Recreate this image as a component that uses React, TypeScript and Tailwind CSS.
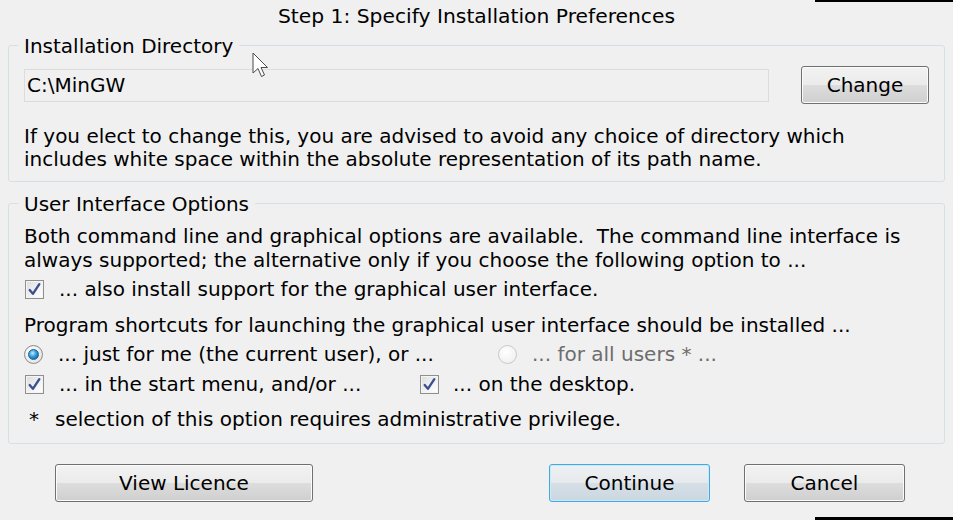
import React from "react";

const font = { fontFamily: '"DejaVu Sans", Verdana, sans-serif' };

function Checkbox() {
  return (
    <span className="inline-flex h-[19px] w-[19px] shrink-0 items-center justify-center border border-[#8f8f8f] bg-[linear-gradient(135deg,#dcdcdc_0%,#f4f4f4_60%,#ffffff_100%)] shadow-[inset_0_0_0_1px_#f4f4f4]">
      <svg width="15" height="15" viewBox="0 0 14 14">
        <path d="M2.5 7.5 L5.5 11 L11.5 2" fill="none" stroke="#3b4f93" strokeWidth="2.2" strokeLinecap="round" strokeLinejoin="round" />
      </svg>
    </span>
  );
}

function Radio({ checked, disabled }: { checked?: boolean; disabled?: boolean }) {
  return (
    <span
      className={
        disabled
          ? "inline-flex h-[19px] w-[19px] shrink-0 items-center justify-center rounded-full border border-[#c9c9c9] bg-[radial-gradient(circle_at_40%_35%,#ffffff_0%,#ececec_100%)]"
          : "inline-flex h-[19px] w-[19px] shrink-0 items-center justify-center rounded-full border border-[#8b8b8b] bg-[radial-gradient(circle_at_40%_35%,#ffffff_0%,#dcdcdc_100%)]"
      }
    >
      {checked && (
        <span className="h-[11px] w-[11px] rounded-full border border-[#1f5f8a] bg-[radial-gradient(circle_at_40%_35%,#bfeaff_0%,#2d9ee0_45%,#0d4f7d_100%)]" />
      )}
    </span>
  );
}

function Button({ children, className, def }: { children: React.ReactNode; className: string; def?: boolean }) {
  return (
    <button
      className={
        (def
          ? "border-[#45a8de] bg-[linear-gradient(to_bottom,#eef1f3_0%,#e6eaed_50%,#d6dfe6_50%,#cbd7e0_100%)] shadow-[inset_0_0_0_1px_#c6ecfb] "
          : "border-[#707070] bg-[linear-gradient(to_bottom,#f2f2f2_0%,#ebebeb_50%,#dddddd_50%,#cfcfcf_100%)] shadow-[inset_0_0_0_1px_#fbfbfb] ") +
        "flex h-[38px] items-center justify-center rounded-[3px] border text-[20px] text-black " +
        className
      }
      style={font}
    >
      {children}
    </button>
  );
}

export default function App() {
  return (
    <div className="relative h-[520px] w-[953px] overflow-hidden bg-[#f0f0f0] text-[20px] text-black" style={font}>
      <div className="absolute right-0 top-0 h-[2px] w-[138px] bg-black" />
      <div className="absolute bottom-0 right-0 h-[3px] w-[138px] bg-black" />

      <div className="flex h-[34px] items-center justify-center pb-[2px] text-[20.3px]">Step 1: Specify Installation Preferences</div>

      <fieldset className="mx-[8px] rounded-[3px] border border-[#d5dfe5] px-[15px] pb-[10px]">
        <legend className="ml-[-6px] px-[6px] pt-[3px] leading-[19px]">Installation Directory</legend>
        <div className="mt-[10px] flex h-[38px] items-center">
          <div className="flex h-[33px] flex-1 items-center border border-[#dcdcdc] px-[2px]">C:\MinGW</div>
          <Button className="ml-[32px] w-[128px]">Change</Button>
        </div>
        <p className="mt-[21px] leading-[23px]">
          If you elect to change this, you are advised to avoid any choice of directory which
          <br />
          includes white space within the absolute representation of its path name.
        </p>
      </fieldset>

      <fieldset className="mx-[8px] mt-[10px] rounded-[3px] border border-[#d5dfe5] px-[15px] pb-[10px]">
        <legend className="ml-[-6px] px-[6px] pt-[2px] leading-[20px]">User Interface Options</legend>
        <div className="mt-[10px] leading-[24px]">
          <div>Both command line and graphical options are available.&nbsp; The command line interface is</div>
          <div>always supported; the alternative only if you choose the following option to ...</div>
        </div>
        <div className="flex h-[34px] items-center pl-[1px]">
          <Checkbox />
          <span className="ml-[15px]">... also install support for the graphical user interface.</span>
        </div>
        <div className="flex h-[38px] items-center">Program shortcuts for launching the graphical user interface should be installed ...</div>
        <div className="flex h-[20px] items-center">
          <Radio checked />
          <span className="ml-[15px] w-[440px]">... just for me (the current user), or ...</span>
          <Radio disabled />
          <span className="ml-[15px] text-[#6d6d6d]">... for all users * ...</span>
        </div>
        <div className="flex h-[40px] items-center pl-[1px]">
          <Checkbox />
          <span className="ml-[15px] w-[361px]">... in the start menu, and/or ...</span>
          <Checkbox />
          <span className="ml-[14px]">... on the desktop.</span>
        </div>
        <div className="flex h-[29px] items-center pl-[5px]">
          <span className="w-[26px]">*</span>
          <span>selection of this option requires administrative privilege.</span>
        </div>
      </fieldset>

      <div className="mt-[20px] flex pl-[55px]">
        <Button className="w-[258px]">View Licence</Button>
        <Button def className="ml-[236px] w-[161px]">Continue</Button>
        <Button className="ml-[34px] w-[161px]">Cancel</Button>
      </div>

      <svg className="absolute left-[252px] top-[52px]" width="22" height="30" viewBox="0 0 22 30">
        <path d="M1 1 L1 21 L6 16.5 L9.5 24.5 L12.5 23 L9 15.5 L15.5 15.5 Z" fill="#ffffff" stroke="#4a4a4a" strokeWidth="1" strokeLinejoin="round" />
      </svg>
    </div>
  );
}
